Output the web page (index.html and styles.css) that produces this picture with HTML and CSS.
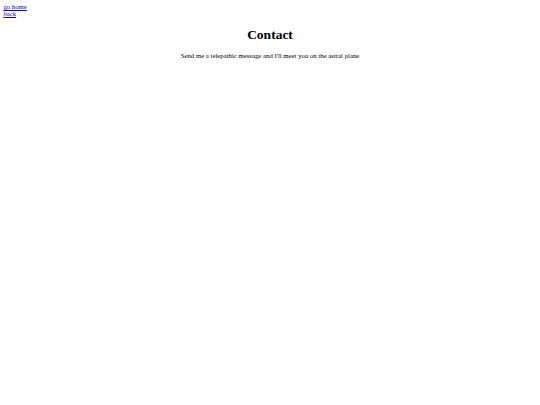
FILE: index.html
```html
<!DOCTYPE html>
<html>
<head>
<meta charset="utf-8">
<link rel="stylesheet" href="styles.css">
</head>
<body class="page">
<nav class="nav">
<a class="nav-link" href="#">go home</a>
<a class="nav-link" href="#">back</a>
</nav>
<main class="content">
<h1 class="title">Contact</h1>
<p class="text">Send me a telepathic message and I'll meet you on the astral plane</p>
</main>
</body>
</html>
```
FILE: styles.css
```css
html, body {
  background: #fff;
}
.page {
  margin: 3.4px;
  font-family: "Liberation Serif", serif;
  font-size: 6.75px;
  color: #000;
}
.nav {
  display: flex;
  flex-direction: column;
  align-items: flex-start;
}
.nav-link {
  color: #0000ee;
  text-decoration: underline;
}
.content {
  text-align: center;
}
.title {
  font-size: 13.5px;
  font-weight: bold;
  margin: 10px 0 9px;
}
.text {
  margin: 6.75px 0;
}
```
